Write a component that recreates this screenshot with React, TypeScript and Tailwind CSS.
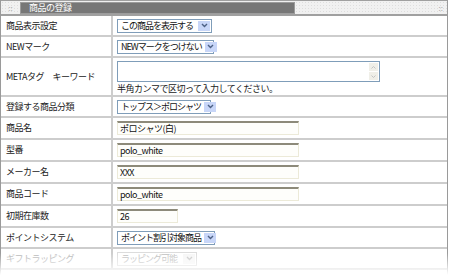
import React from "react";

const font = { fontFamily: '"Noto Sans CJK JP", "Noto Sans", sans-serif' };

function Arrow({ disabled }: { disabled?: boolean }) {
  return (
    <div
      className={
        "ml-auto mr-[1px] flex h-[10px] w-[12px] shrink-0 items-center justify-center " +
        (disabled ? "bg-[#f6f6f6]" : "bg-[#c8d6f8]")
      }
    >
      <svg width="7" height="5" viewBox="0 0 7 5">
        <path
          d="M1 1 L3.5 3.5 L6 1"
          fill="none"
          stroke={disabled ? "#c8c8c8" : "#4d6185"}
          strokeWidth="1.4"
        />
      </svg>
    </div>
  );
}

function Select({ text, w, disabled }: { text: string; w: string; disabled?: boolean }) {
  return (
    <div
      className={
        "flex h-[14px] items-center gap-[3px] border pl-[3px] " +
        w +
        (disabled ? " border-[#dcdcdc] text-[#bcbcbc]" : " border-[#7f9db9] text-[#111]")
      }
    >
      <span className="shrink-0 whitespace-nowrap text-[9px] leading-none tracking-[-1px]">{text}</span>
      <Arrow disabled={disabled} />
    </div>
  );
}

function Input({ text, w }: { text: string; w: string }) {
  return (
    <div
      className={
        "flex h-[14px] items-center border border-[#ecead8] border-t-2 border-t-[#8d8a7a] bg-[#fefefb] pl-[2px] " +
        w
      }
    >
      <span className="whitespace-nowrap text-[9px] leading-none tracking-[-0.5px] text-[#111]">{text}</span>
    </div>
  );
}

function Row({
  label,
  h,
  children,
  faded,
}: {
  label: string;
  h: string;
  children: React.ReactNode;
  faded?: boolean;
}) {
  return (
    <div className={"flex border-b-2 border-[#cdcdcd] " + h}>
      <div
        className={
          "flex w-[112px] shrink-0 items-center border-r-2 border-[#cdcdcd] pl-[5px] text-[9px] tracking-[-0.5px] " +
          (faded ? "text-[#b4b4b4]" : "text-[#222]")
        }
      >
        {label}
      </div>
      <div className="flex flex-1 items-center pl-[4px]">{children}</div>
    </div>
  );
}

export default function App() {
  return (
    <div className="relative h-[275px] w-[450px] overflow-hidden bg-white" style={font}>
      <div className="mr-[2px] border-l border-r border-[#9a9a9a]">
        {/* header */}
        <div className="flex h-[16px] items-center border-t border-b-2 border-[#a0a0a0] bg-[#f1f1f1] bg-[radial-gradient(#dedede_0.6px,transparent_0.7px)] bg-[length:3px_3px]">
          <div className="flex w-[19px] justify-center text-[8px] leading-none text-[#aaa]">::</div>
          <div className="flex h-[12px] w-[275px] items-center border border-[#9c9c9c] bg-[#777] pl-[8px] text-[9px] leading-none tracking-[-0.5px] text-white">
            商品の登録
          </div>
          <div className="ml-auto mr-[4px] text-[8px] leading-none text-[#aaa]">::</div>
        </div>

        <Row label="商品表示設定" h="h-[21px]">
          <Select text="この商品を表示する" w="w-[95px]" />
        </Row>
        <Row label="NEWマーク" h="h-[21px]">
          <Select text="NEWマークをつけない" w="w-[97px]" />
        </Row>
        <Row label="METAタグ　キーワード" h="h-[39px]">
          <div className="flex flex-col pt-[3px]">
            <div className="flex h-[21px] w-[263px] border border-[#7f9db9] bg-white">
              <div className="ml-auto flex w-[11px] flex-col gap-[1px] p-[1px]">
                <div className="flex h-[8px] items-center justify-center bg-[#f0efe8]">
                  <svg width="5" height="3" viewBox="0 0 5 3">
                    <path d="M0.5 2.5 L2.5 0.5 L4.5 2.5" fill="none" stroke="#c4c4c4" strokeWidth="1" />
                  </svg>
                </div>
                <div className="flex h-[8px] items-center justify-center bg-[#f0efe8]">
                  <svg width="5" height="3" viewBox="0 0 5 3">
                    <path d="M0.5 0.5 L2.5 2.5 L4.5 0.5" fill="none" stroke="#c4c4c4" strokeWidth="1" />
                  </svg>
                </div>
              </div>
            </div>
            <div className="mt-[1px] whitespace-nowrap text-[9px] leading-[12px] tracking-[-0.5px] text-[#222]">
              半角カンマで区切って入力してください。
            </div>
          </div>
        </Row>
        <Row label="登録する商品分類" h="h-[21px]">
          <Select text="トップス＞ポロシャツ" w="w-[94px]" />
        </Row>
        <Row label="商品名" h="h-[22px]">
          <Input text="ポロシャツ(白)" w="w-[182px]" />
        </Row>
        <Row label="型番" h="h-[22px]">
          <Input text="polo_white" w="w-[182px]" />
        </Row>
        <Row label="メーカー名" h="h-[22px]">
          <Input text="XXX" w="w-[182px]" />
        </Row>
        <Row label="商品コード" h="h-[22px]">
          <Input text="polo_white" w="w-[182px]" />
        </Row>
        <Row label="初期在庫数" h="h-[22px]">
          <Input text="26" w="w-[61px]" />
        </Row>
        <Row label="ポイントシステム" h="h-[21px]">
          <Select text="ポイント割引対象商品" w="w-[98px]" />
        </Row>
        <Row label="ギフトラッピング" h="h-[21px]" faded>
          <Select text="ラッピング可能" w="w-[80px]" disabled />
        </Row>
        <div className="h-[20px]" />
      </div>
      <div className="pointer-events-none absolute bottom-0 left-0 h-[22px] w-full bg-gradient-to-b from-white/0 to-white" />
    </div>
  );
}
